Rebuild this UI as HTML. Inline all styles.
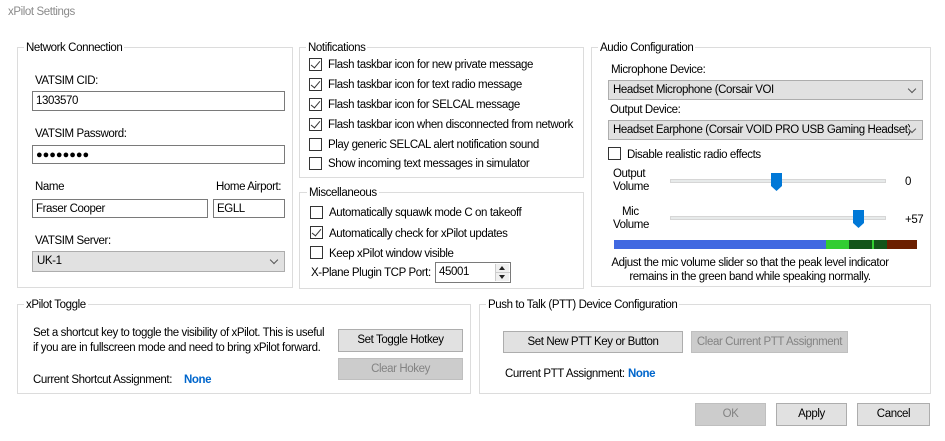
<!DOCTYPE html>
<html><head><meta charset="utf-8"><style>
*{box-sizing:border-box;margin:0;padding:0}
body{width:945px;height:441px;background:#fff;position:relative;overflow:hidden;font-family:"Liberation Sans",sans-serif;font-size:11.5px;color:#000;letter-spacing:-0.4px}
.a{position:absolute;white-space:nowrap;line-height:15px;margin-top:1px}
.g{position:absolute;border:1px solid #dcdcdc}
.gl{position:absolute;background:#fff;padding:0 2px;line-height:14px;white-space:nowrap;margin-top:1px}
.in{position:absolute;border:1px solid #7a7a7a;background:#fff;padding-left:3px;line-height:18px;white-space:nowrap}
.sel{position:absolute;border:1px solid #adadad;background:#e1e1e1;padding-left:4px;line-height:19px;white-space:nowrap;overflow:hidden}
.sel:after{content:"";position:absolute;right:7px;top:5px;width:5px;height:5px;border-right:1px solid #555;border-bottom:1px solid #555;transform:rotate(45deg);background:#e1e1e1}
.cb{position:absolute;width:13px;height:13px;border:1px solid #333;background:#fff}
.cb.c:after{content:"";position:absolute;left:3px;top:0px;width:4px;height:8px;border-right:1.3px solid #333;border-bottom:1.3px solid #333;transform:rotate(40deg)}
.btn{position:absolute;border:1px solid #adadad;background:#e1e1e1;text-align:center;line-height:21px;white-space:nowrap}
.dis{background:#cccccc;border-color:#bfbfbf;color:#838383}
.none{color:#0066cc;font-weight:bold}
.trk{position:absolute;height:4px;background:#e7eaea;border:1px solid #d6d6d6}
.th{position:absolute;width:11px;height:18px}
</style></head><body>
<div class="a" style="left:8px;top:4px;color:#8a8a8a">xPilot Settings</div>

<div class="g" style="left:17px;top:47px;width:276px;height:241px"></div>
<div class="gl" style="left:24px;top:40px">Network Connection</div>
<div class="a" style="left:35px;top:73px">VATSIM CID:</div>
<div class="in" style="left:32px;top:91px;width:253px;height:20px">1303570</div>
<div class="a" style="left:35px;top:126px">VATSIM Password:</div>
<div class="in" style="left:32px;top:145px;width:253px;height:19px;font-size:11px;letter-spacing:0">●●●●●●●●</div>
<div class="a" style="left:35px;top:179px">Name</div>
<div class="a" style="left:216px;top:179px">Home Airport:</div>
<div class="in" style="left:32px;top:199px;width:176px;height:19px">Fraser Cooper</div>
<div class="in" style="left:213px;top:199px;width:72px;height:19px">EGLL</div>
<div class="a" style="left:35px;top:233px">VATSIM Server:</div>
<div class="sel" style="left:32px;top:251px;width:253px;height:21px">UK-1</div>

<div class="g" style="left:299px;top:47px;width:285px;height:131px"></div>
<div class="gl" style="left:306px;top:40px">Notifications</div>
<div class="cb c" style="left:309px;top:58px"></div><div class="a" style="left:328px;top:57px">Flash taskbar icon for new private message</div>
<div class="cb c" style="left:309px;top:78px"></div><div class="a" style="left:328px;top:77px">Flash taskbar icon for text radio message</div>
<div class="cb c" style="left:309px;top:98px"></div><div class="a" style="left:328px;top:97px">Flash taskbar icon for SELCAL message</div>
<div class="cb c" style="left:309px;top:118px"></div><div class="a" style="left:328px;top:117px">Flash taskbar icon when disconnected from network</div>
<div class="cb" style="left:309px;top:138px"></div><div class="a" style="left:328px;top:137px">Play generic SELCAL alert notification sound</div>
<div class="cb" style="left:309px;top:157px"></div><div class="a" style="left:328px;top:156px">Show incoming text messages in simulator</div>

<div class="g" style="left:299px;top:192px;width:285px;height:97px"></div>
<div class="gl" style="left:307px;top:185px">Miscellaneous</div>
<div class="cb" style="left:310px;top:206px"></div><div class="a" style="left:329px;top:205px">Automatically squawk mode C on takeoff</div>
<div class="cb c" style="left:310px;top:226px"></div><div class="a" style="left:329px;top:226px">Automatically check for xPilot updates</div>
<div class="cb" style="left:310px;top:246px"></div><div class="a" style="left:329px;top:246px">Keep xPilot window visible</div>
<div class="a" style="left:311px;top:265px">X-Plane Plugin TCP Port:</div>
<div class="in" style="left:435px;top:262px;width:76px;height:21px">45001</div>
<div style="position:absolute;left:495px;top:264px;width:14px;height:17px;background:#f0f0f0;border-left:1px solid #ccc"><div style="position:absolute;left:3px;top:2px;border:3px solid transparent;border-bottom:4px solid #222;border-top:0"></div><div style="position:absolute;left:0;top:8px;width:14px;height:1px;background:#ccc"></div><div style="position:absolute;left:3px;top:11px;border:3px solid transparent;border-top:4px solid #222;border-bottom:0"></div></div>

<div class="g" style="left:591px;top:47px;width:340px;height:240px"></div>
<div class="gl" style="left:598px;top:40px">Audio Configuration</div>
<div class="a" style="left:611px;top:62px">Microphone Device:</div>
<div class="sel" style="left:608px;top:80px;width:315px;height:20px">Headset Microphone (Corsair VOI</div>
<div class="a" style="left:610px;top:102px">Output Device:</div>
<div class="sel" style="left:608px;top:120px;width:315px;height:20px;padding-right:20px">Headset Earphone (Corsair VOID PRO USB Gaming Headset)</div>
<div class="cb" style="left:608px;top:147px"></div><div class="a" style="left:627px;top:147px">Disable realistic radio effects</div>
<div class="a" style="left:613px;top:167px;line-height:13px">Output<br>Volume</div>
<div class="trk" style="left:670px;top:179px;width:216px"></div>
<svg class="th" style="left:771px;top:173px" viewBox="0 0 11 18"><path d="M0 0H11V13L5.5 18L0 13Z" fill="#0078d7"/></svg>
<div class="a" style="left:905px;top:174px">0</div>
<div class="a" style="left:622px;top:205px;line-height:13px">Mic</div>
<div class="a" style="left:613px;top:218px;line-height:13px">Volume</div>
<div class="trk" style="left:670px;top:216px;width:216px"></div>
<svg class="th" style="left:853px;top:210px" viewBox="0 0 11 18"><path d="M0 0H11V13L5.5 18L0 13Z" fill="#0078d7"/></svg>
<div class="a" style="left:905px;top:212px">+57</div>
<div style="position:absolute;left:614px;top:240px;width:212px;height:9px;background:#4169e1"></div>
<div style="position:absolute;left:826px;top:240px;width:23px;height:9px;background:#32cd32"></div>
<div style="position:absolute;left:849px;top:240px;width:38px;height:9px;background:#13541a"></div>
<div style="position:absolute;left:872px;top:240px;width:2px;height:9px;background:#32cd32"></div>
<div style="position:absolute;left:887px;top:240px;width:30px;height:9px;background:#6b1f00"></div>
<div class="a" style="left:600px;top:255px;width:300px;text-align:center;line-height:14px">Adjust the mic volume slider so that the peak level indicator<br>remains in the green band while speaking normally.</div>

<div class="g" style="left:17px;top:304px;width:454px;height:90px"></div>
<div class="gl" style="left:24px;top:297px">xPilot Toggle</div>
<div class="a" style="left:33px;top:325px">Set a shortcut key to toggle the visibility of xPilot. This is useful</div>
<div class="a" style="left:33px;top:340px">if you are in fullscreen mode and need to bring xPilot forward.</div>
<div class="btn" style="left:338px;top:329px;width:125px;height:23px">Set Toggle Hotkey</div>
<div class="btn dis" style="left:338px;top:358px;width:125px;height:22px">Clear Hokey</div>
<div class="a" style="left:33px;top:372px">Current Shortcut Assignment:</div>
<div class="a none" style="left:184px;top:372px">None</div>

<div class="g" style="left:479px;top:304px;width:452px;height:90px"></div>
<div class="gl" style="left:486px;top:297px">Push to Talk (PTT) Device Configuration</div>
<div class="btn" style="left:503px;top:331px;width:180px;height:22px">Set New PTT Key or Button</div>
<div class="btn dis" style="left:691px;top:331px;width:157px;height:22px">Clear Current PTT Assignment</div>
<div class="a" style="left:505px;top:366px">Current PTT Assignment:</div>
<div class="a none" style="left:628px;top:366px">None</div>

<div class="btn dis" style="left:695px;top:403px;width:71px;height:23px">OK</div>
<div class="btn" style="left:776px;top:403px;width:71px;height:23px">Apply</div>
<div class="btn" style="left:857px;top:403px;width:73px;height:23px">Cancel</div>
</body></html>
